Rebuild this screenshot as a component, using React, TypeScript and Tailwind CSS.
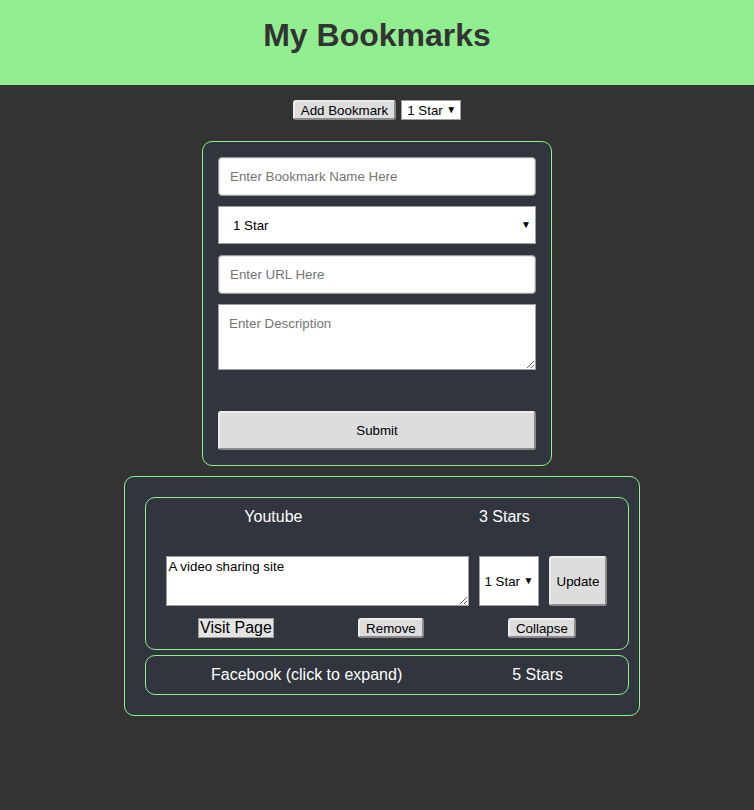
import { useState } from 'react'

const btn =
  'bg-[#dddddd] text-black border-2 border-t-[#ececec] border-l-[#ececec] border-b-[#8a8a8a] border-r-[#8a8a8a] rounded-[3px] px-[6px] text-[13.33px] leading-[15px]'

type Bookmark = {
  name: string
  stars: number
  url: string
  description: string
}

const starLabel = (n: number) => (n === 1 ? '1 Star' : `${n} Stars`)

function StarSelect({ className, textPad }: { className: string; textPad: string }) {
  return (
    <div className={`relative bg-white border border-[#a0a0a0] ${className}`}>
      <select
        className={`block appearance-none w-full h-full bg-transparent text-black text-[13.33px] leading-[15px] outline-none ${textPad}`}
        defaultValue="1"
      >
        {[1, 2, 3, 4, 5].map((n) => (
          <option key={n} value={n}>
            {starLabel(n)}
          </option>
        ))}
      </select>
      <span className="pointer-events-none absolute right-[4px] top-1/2 -translate-y-1/2 text-[10px] leading-none text-black">
        ▼
      </span>
    </div>
  )
}

export default function App() {
  const [bookmarks] = useState<Bookmark[]>([
    { name: 'Youtube', stars: 3, url: 'https://youtube.com', description: 'A video sharing site' },
    { name: 'Facebook', stars: 5, url: 'https://facebook.com', description: 'A social network' },
  ])
  const [expanded, setExpanded] = useState<string | null>('Youtube')

  const field =
    'w-full bg-white border border-[#9a9a9a] shadow-[inset_0_0_0_1px_#e6e6e6] rounded-[4px] px-[11px] text-[13.33px] text-black placeholder:text-[#757575] outline-none'

  return (
    <div className="min-h-screen bg-[#333333] font-['Liberation_Sans',Arial,sans-serif] pb-10">
      {/* Header */}
      <header className="h-[85px] bg-[#90ee90] pt-[17px]">
        <h1 className="text-center text-[32px] font-bold leading-[37px] text-[#333333]">My Bookmarks</h1>
      </header>

      {/* Toolbar */}
      <div className="flex justify-center items-center gap-[5px] mt-[15px] h-[20px]">
        <button className={`${btn} h-[20px]`}>Add Bookmark</button>
        <StarSelect className="w-[60px] h-[20px]" textPad="pl-[5px]" />
      </div>

      {/* Add form */}
      <form
        className="mx-auto mt-[21px] w-[350px] rounded-[10px] border border-[#90ee90] bg-[#31353d] p-[15px] flex flex-col"
        onSubmit={(e) => e.preventDefault()}
      >
        <input className={`${field} h-[39px]`} placeholder="Enter Bookmark Name Here" />
        <StarSelect className="mt-[10px] h-[38px] w-full" textPad="pl-[14px]" />
        <input className={`${field} mt-[11px] h-[39px]`} placeholder="Enter URL Here" />
        <textarea
          className="mt-[10px] h-[66px] w-full bg-white border border-[#a0a0a0] px-[10px] pt-[9px] text-[13.33px] text-black placeholder:text-[#757575] outline-none"
          placeholder="Enter Description"
        />
        <button type="submit" className={`${btn} mt-[41px] h-[39px] w-full`}>
          Submit
        </button>
      </form>

      {/* Bookmark list */}
      <div className="mt-[10px] ml-[124px] w-[516px] rounded-[10px] border border-[#90ee90] bg-[#31353d] pl-[20px] pr-[10px] pt-[20px] pb-[20px] flex flex-col gap-[5px]">
        {bookmarks.map((b) =>
          expanded === b.name ? (
            <div key={b.name} className="rounded-[10px] border border-[#90ee90] pt-[10px] pb-[11px]">
              <div className="flex justify-around px-[10px] text-[16px] leading-[18px] text-white">
                <span>{b.name}</span>
                <span>{starLabel(b.stars)}</span>
              </div>
              <div className="mt-[30px] flex justify-center gap-[10px] h-[50px] pr-[2px]">
                <textarea
                  className="w-[303px] h-[50px] bg-white border border-[#a0a0a0] p-[2px] text-[13.33px] leading-[15px] text-black outline-none"
                  defaultValue={b.description}
                />
                <StarSelect className="w-[60px] h-[50px]" textPad="pl-[5px]" />
                <button className={`${btn} w-[58px] h-[50px]`}>Update</button>
              </div>
              <div className="mt-[12px] flex justify-around items-center px-[10px] h-[20px]">
                <button className="bg-[#e4e4e4] border border-[#9a9a9a] px-[1px] text-[16px] leading-[18px] text-black">
                  Visit Page
                </button>
                <button className={`${btn} h-[20px]`}>Remove</button>
                <button className={`${btn} h-[20px]`} onClick={() => setExpanded(null)}>
                  Collapse
                </button>
              </div>
            </div>
          ) : (
            <div
              key={b.name}
              className="h-[40px] rounded-[10px] border border-[#90ee90] flex justify-around items-center px-[10px] text-[16px] text-white cursor-pointer"
              onClick={() => setExpanded(b.name)}
            >
              <span>{b.name} (click to expand)</span>
              <span>{starLabel(b.stars)}</span>
            </div>
          )
        )}
      </div>
    </div>
  )
}
